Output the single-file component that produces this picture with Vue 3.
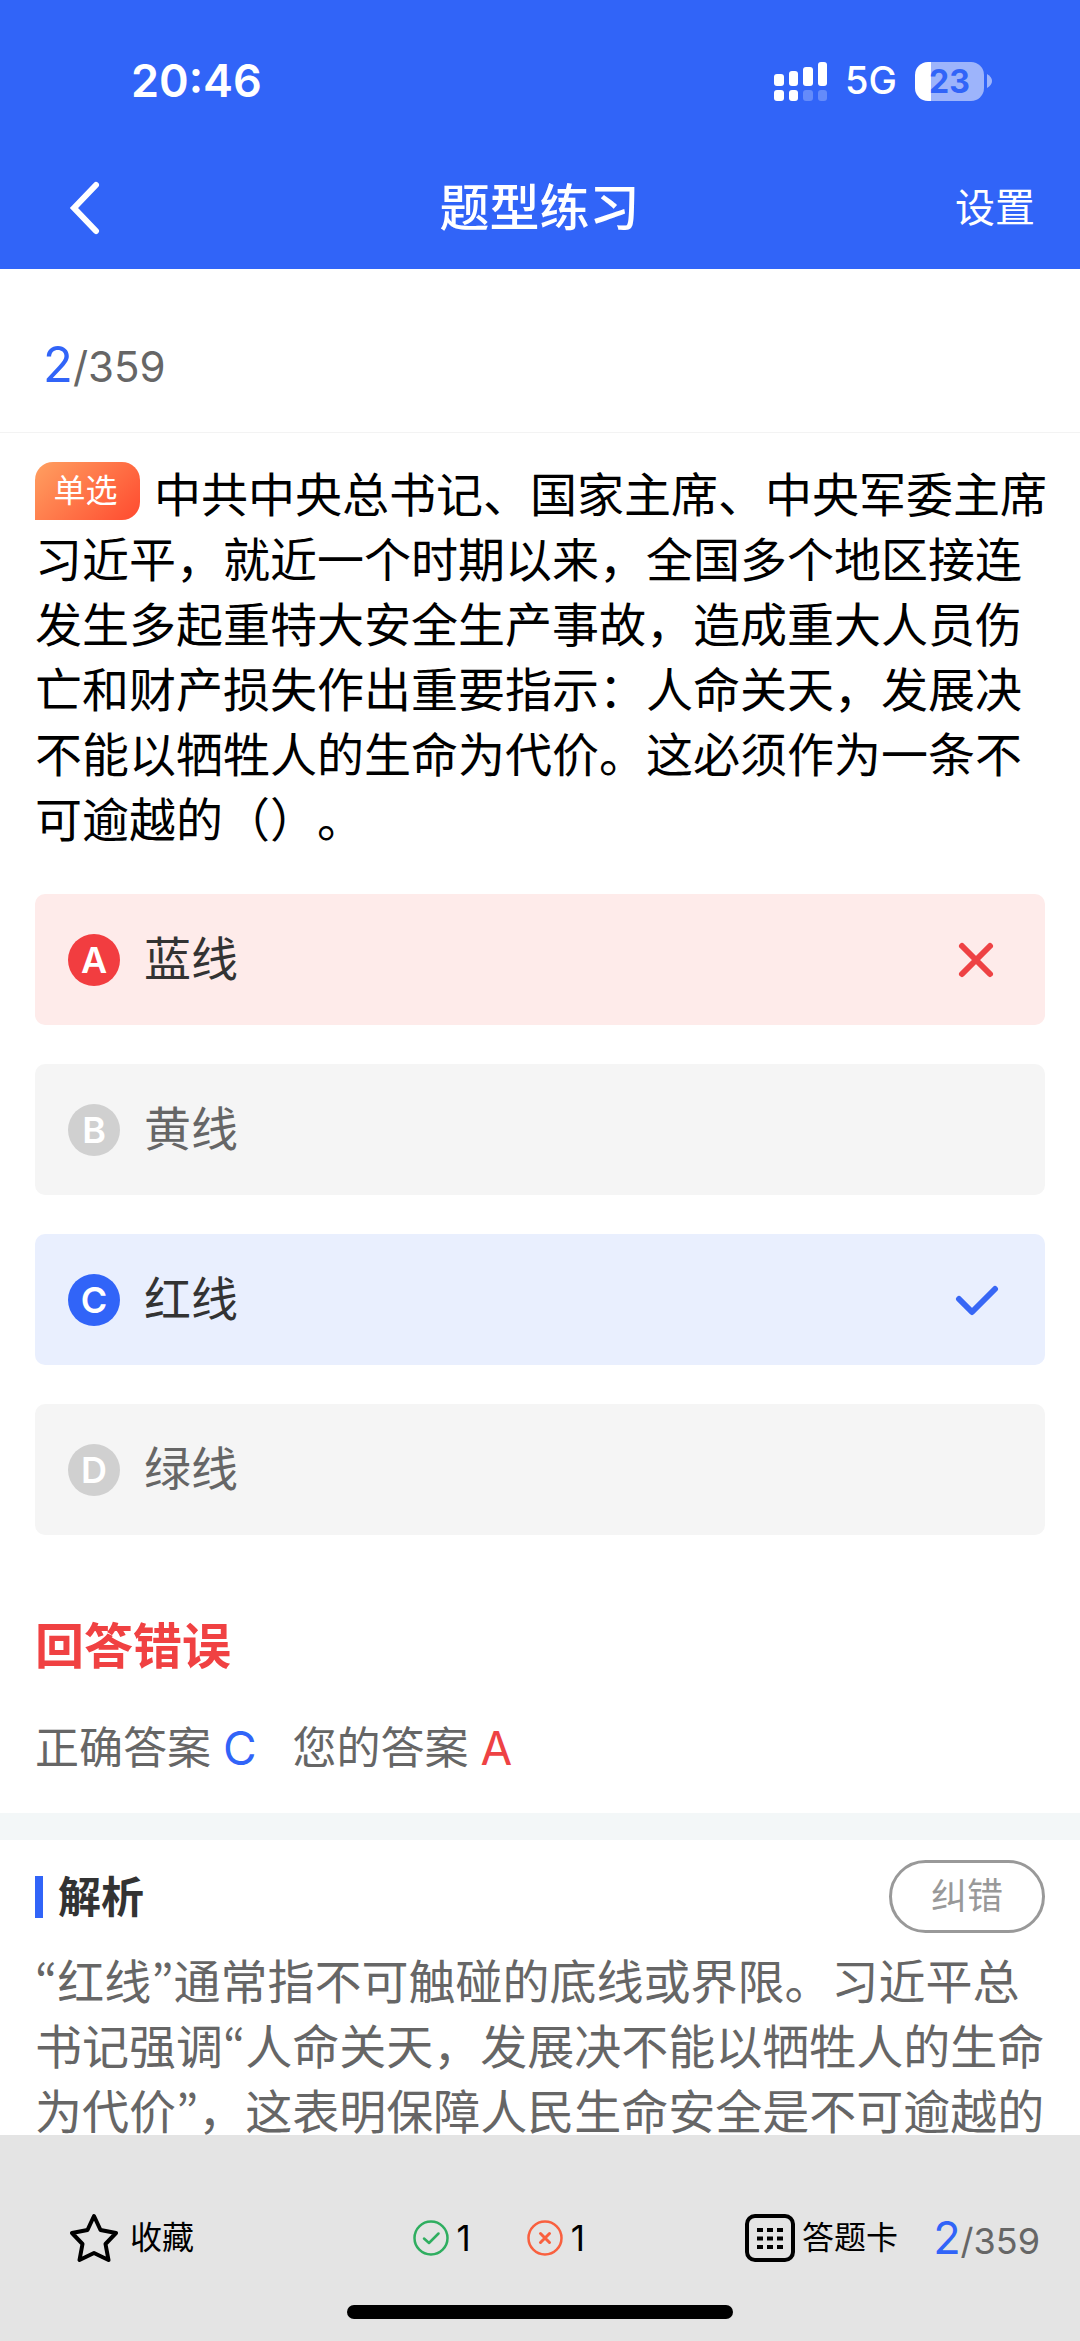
<script setup>
import { ref } from 'vue'

const current = ref(2)
const total = ref(359)
const rightCount = ref(1)
const wrongCount = ref(1)

const question =
  '中共中央总书记、国家主席、中央军委主席习近平，就近一个时期以来，全国多个地区接连发生多起重特大安全生产事故，造成重大人员伤亡和财产损失作出重要指示：人命关天，发展决不能以牺牲人的生命为代价。这必须作为一条不可逾越的（）。'

const options = [
  { key: 'A', text: '蓝线', state: 'wrong' },
  { key: 'B', text: '黄线', state: 'idle' },
  { key: 'C', text: '红线', state: 'right' },
  { key: 'D', text: '绿线', state: 'idle' }
]

const correctAnswer = 'C'
const userAnswer = 'A'
</script>

<template>
  <div class="page">
    <header class="header">
      <div class="status-bar">
        <span class="time">20:46</span>
        <div class="status-icons">
          <svg class="signal" viewBox="0 0 54 39" fill="#fff">
            <rect x="0" y="12" width="10" height="12" rx="3" />
            <rect x="15" y="9" width="9" height="15" rx="3" />
            <rect x="29" y="5" width="10" height="19" rx="3" />
            <rect x="44" y="0" width="9" height="24" rx="3" />
            <rect x="0" y="28" width="10" height="11" rx="3" />
            <rect x="15" y="28" width="9" height="11" rx="3" />
            <rect x="29" y="28" width="10" height="11" rx="3" opacity="0.25" />
            <rect x="44" y="28" width="9" height="11" rx="3" opacity="0.25" />
          </svg>
          <span class="network">5G</span>
          <div class="battery">
            <span class="battery-body">23</span>
            <svg class="battery-tip" viewBox="0 0 5 14"><path d="M0 0Q5 3 5 7T0 14Z" fill="#9db4fb" /></svg>
          </div>
        </div>
      </div>
      <nav class="nav-bar">
        <button class="back-btn" aria-label="返回">
          <svg viewBox="0 0 32 56" fill="none" stroke="#fff" stroke-width="6" stroke-linecap="round" stroke-linejoin="miter">
            <path d="M28 5L6 28l22 23" />
          </svg>
        </button>
        <h1>题型练习</h1>
        <button class="settings-btn">设置</button>
      </nav>
    </header>

    <main class="content">
      <div class="progress">
        <span class="current">{{ current }}</span><span class="total">/{{ total }}</span>
      </div>

      <section class="question">
        <p class="question-text"><span class="tag">单选</span>{{ question }}</p>
        <div class="options">
          <button v-for="item in options" :key="item.key" class="option" :class="item.state">
            <span class="option-key">{{ item.key }}</span>
            <span class="option-text">{{ item.text }}</span>
            <svg v-if="item.state === 'wrong'" class="mark" viewBox="0 0 44 44">
              <path d="M7 8l28 28M35 8L7 36" />
            </svg>
            <svg v-if="item.state === 'right'" class="mark" viewBox="0 0 44 44">
              <path d="M4 21l13 13L40 11" />
            </svg>
          </button>
        </div>
      </section>

      <section class="result">
        <h2>回答错误</h2>
        <div class="answers">
          <span>正确答案</span>
          <span class="answer answer-right">{{ correctAnswer }}</span>
          <span>您的答案</span>
          <span class="answer answer-wrong">{{ userAnswer }}</span>
        </div>
      </section>

      <section class="analysis">
        <div class="analysis-header">
          <h3>解析</h3>
          <button class="report-btn">纠错</button>
        </div>
        <p class="explanation"><span class="quote">“</span>红线<span class="quote">”</span>通常指不可触碰的底线或界限。习近平总书记强调<span class="quote">“</span>人命关天，发展决不能以牺牲人的生命为代价<span class="quote">”</span>，这表明保障人民生命安全是不可逾越的</p>
      </section>
    </main>

    <footer class="footer">
      <div class="toolbar">
        <button class="tool favorite">
          <svg class="star" viewBox="0 0 48 50" fill="none" stroke="#000" stroke-width="4" stroke-linejoin="round">
            <path d="M24 3L30.500 17L46 20L35.500 31L38.500 47L24 40L9.500 47L12.500 31L2 20L17.500 17Z" />
          </svg>
          <span>收藏</span>
        </button>
        <div class="stats">
          <span class="stat">
            <svg viewBox="0 0 36 36" fill="none" stroke="#2fae60" stroke-width="2.500" stroke-linecap="round" stroke-linejoin="round">
              <circle cx="18" cy="18" r="16.500" />
              <path d="M11 18.500l5 4.500 9.500-9.500" />
            </svg>
            {{ rightCount }}
          </span>
          <span class="stat">
            <svg viewBox="0 0 36 36" fill="none" stroke="#f9603f" stroke-width="2.500" stroke-linecap="round">
              <circle cx="18" cy="18" r="16.500" />
              <path d="M13.500 13.500l9 9M22.500 13.500l-9 9" stroke-width="3" />
            </svg>
            {{ wrongCount }}
          </span>
        </div>
        <div class="card-group">
          <button class="tool card-btn">
            <svg class="grid-icon" viewBox="0 0 50 48">
              <rect x="2" y="2" width="46" height="44" rx="8" fill="none" stroke="#000" stroke-width="4" />
              <path d="M12 16h26M12 24.500h26M12 33h26" stroke="#000" stroke-width="4" stroke-dasharray="6 4" />
            </svg>
            <span>答题卡</span>
          </button>
          <div class="footer-progress">
            <span class="current">{{ current }}</span><span class="total">/{{ total }}</span>
          </div>
        </div>
      </div>
      <div class="home-indicator"></div>
    </footer>
  </div>
</template>

<style>
body {
  margin: 0;
}
</style>

<style scoped>
.page {
  display: flex;
  flex-direction: column;
  height: 100vh;
  background: #fff;
  color: #000;
  font-family: Inter, 'Noto Sans CJK SC', sans-serif;
  line-height: 1.2;
  text-spacing-trim: space-all;
}

h1,
h2,
h3,
p {
  margin: 0;
}

button {
  padding: 0;
  border: none;
  background: none;
  color: inherit;
  font-family: inherit;
  line-height: inherit;
  cursor: pointer;
}

svg {
  display: block;
  flex-shrink: 0;
}

/* header */
.header {
  flex-shrink: 0;
  background: #3164f8;
  color: #fff;
}

.status-bar {
  display: flex;
  justify-content: space-between;
  align-items: center;
  height: 100px;
  padding: 31px 88px 15px 131px;
}

.time {
  font-size: 45px;
  font-weight: 600;
}

.status-icons {
  display: flex;
  align-items: center;
}

.signal {
  width: 54px;
  height: 39px;
}

.network {
  margin: 0 18px 0 17px;
  font-size: 38px;
  font-weight: 500;
}

.battery {
  display: flex;
  align-items: center;
  gap: 3px;
}

.battery-body {
  width: 69px;
  border-radius: 13px;
  background: linear-gradient(to right, #fff 16px, #9db4fb 16px);
  color: #3164f8;
  font-size: 32px;
  font-weight: 700;
  line-height: 39px;
  text-align: center;
}

.battery-tip {
  width: 5px;
  height: 14px;
}

.nav-bar {
  display: grid;
  grid-template-columns: 1fr auto 1fr;
  align-items: center;
  height: 123px;
  padding: 0 45px 0 68px;
}

.back-btn {
  justify-self: start;
}

.back-btn svg {
  width: 32px;
  height: 56px;
}

.nav-bar h1 {
  padding-right: 24px;
  font-size: 50px;
  font-weight: 500;
}

.settings-btn {
  justify-self: end;
  font-size: 40px;
}

/* content */
.content {
  flex: 1;
  min-height: 0;
  overflow: hidden;
}

.progress {
  padding: 66px 43px 35px;
  border-bottom: 1px solid #f3f3f3;
  font-size: 42px;
  line-height: 60px;
}

.current {
  color: #3164f8;
}

.progress .current {
  font-size: 49px;
}

.total {
  color: #666;
}

.question {
  padding: 0 35px;
}

.question-text {
  margin: 29px -12px 42px 0;
  font-size: 47px;
  line-height: 65px;
}

.tag {
  display: inline-block;
  box-sizing: border-box;
  width: 105px;
  margin-right: 14px;
  padding-right: 4px;
  border-radius: 18px 18px 18px 0;
  background: linear-gradient(135deg, #ffa061, #ff4a2f);
  color: #fff;
  font-size: 32px;
  line-height: 58px;
  text-align: center;
  vertical-align: top;
}

.options {
  display: flex;
  flex-direction: column;
  gap: 39px;
}

.option {
  display: flex;
  align-items: center;
  height: 131px;
  padding: 0 46px 0 33px;
  border-radius: 10px;
  background: #f5f5f5;
  color: #666;
  font-size: 47px;
}

.option-key {
  width: 52px;
  border-radius: 50%;
  background: #d0d0d0;
  color: #fff;
  font-size: 36px;
  font-weight: 600;
  line-height: 52px;
  text-align: center;
}

.option-text {
  flex: 1;
  margin-left: 24px;
  text-align: left;
}

.mark {
  width: 44px;
  height: 44px;
  fill: none;
  stroke-width: 6;
  stroke-linecap: round;
  stroke-linejoin: round;
}

.option.wrong {
  background: #feebea;
  color: #333;
}

.option.wrong .option-key {
  background: #f23d40;
}

.option.wrong .mark {
  stroke: #ee4244;
}

.option.right {
  background: #e9effe;
  color: #333;
}

.option.right .option-key {
  background: #3164f8;
}

.option.right .mark {
  stroke: #3867f5;
}

.result {
  padding: 82px 35px 35px;
  line-height: 60px;
}

.result h2 {
  margin-bottom: 41px;
  color: #f04142;
  font-size: 49px;
  font-weight: 700;
}

.answers {
  display: flex;
  color: #666;
  font-size: 44px;
}

.answer {
  margin: 0 36px 0 12px;
  font-size: 46px;
}

.answer-right {
  color: #3164f8;
}

.answer-wrong {
  color: #ee4244;
}

.analysis {
  padding: 20px 35px 0;
  border-top: 27px solid #f3f7f8;
}

.analysis-header {
  display: flex;
  justify-content: space-between;
  align-items: center;
  margin-bottom: 16px;
}

.analysis-header h3 {
  padding-left: 15px;
  border-left: 8px solid #3164f8;
  color: #333;
  font-size: 43px;
  font-weight: 700;
  line-height: 42px;
}

.report-btn {
  width: 156px;
  height: 73px;
  border: 3px solid #999;
  border-radius: 37px;
  color: #999;
  font-size: 36px;
}

.explanation {
  margin-right: -12px;
  color: #666;
  font-size: 47px;
  line-height: 65px;
}

/* the KR face has proportional curly quotes */
.quote {
  font-family: 'Noto Sans CJK KR', sans-serif;
  line-height: 1;
}

/* footer */
.footer {
  flex-shrink: 0;
  padding: 67px 0 22px;
  background: #e4e4e4;
}

.toolbar {
  display: flex;
  align-items: center;
  height: 72px;
  margin-bottom: 31px;
  padding: 0 40px 0 70px;
}

.tool {
  display: flex;
  align-items: center;
  font-size: 32px;
}

.star {
  width: 48px;
  height: 50px;
  margin-right: 12px;
}

.stats {
  display: flex;
  gap: 56px;
  margin: 0 160px 0 auto;
}

.stat {
  display: flex;
  align-items: center;
  gap: 8px;
  font-size: 35px;
}

.stat svg {
  width: 36px;
  height: 36px;
}

.card-group {
  display: flex;
  align-items: center;
}

.grid-icon {
  width: 50px;
  height: 48px;
  margin-right: 7px;
}

.footer-progress {
  margin-left: 35px;
  font-size: 36px;
}

.footer-progress .current {
  font-size: 45px;
}

.home-indicator {
  width: 386px;
  height: 14px;
  margin: 0 auto;
  border-radius: 7px;
  background: #000;
}
</style>
